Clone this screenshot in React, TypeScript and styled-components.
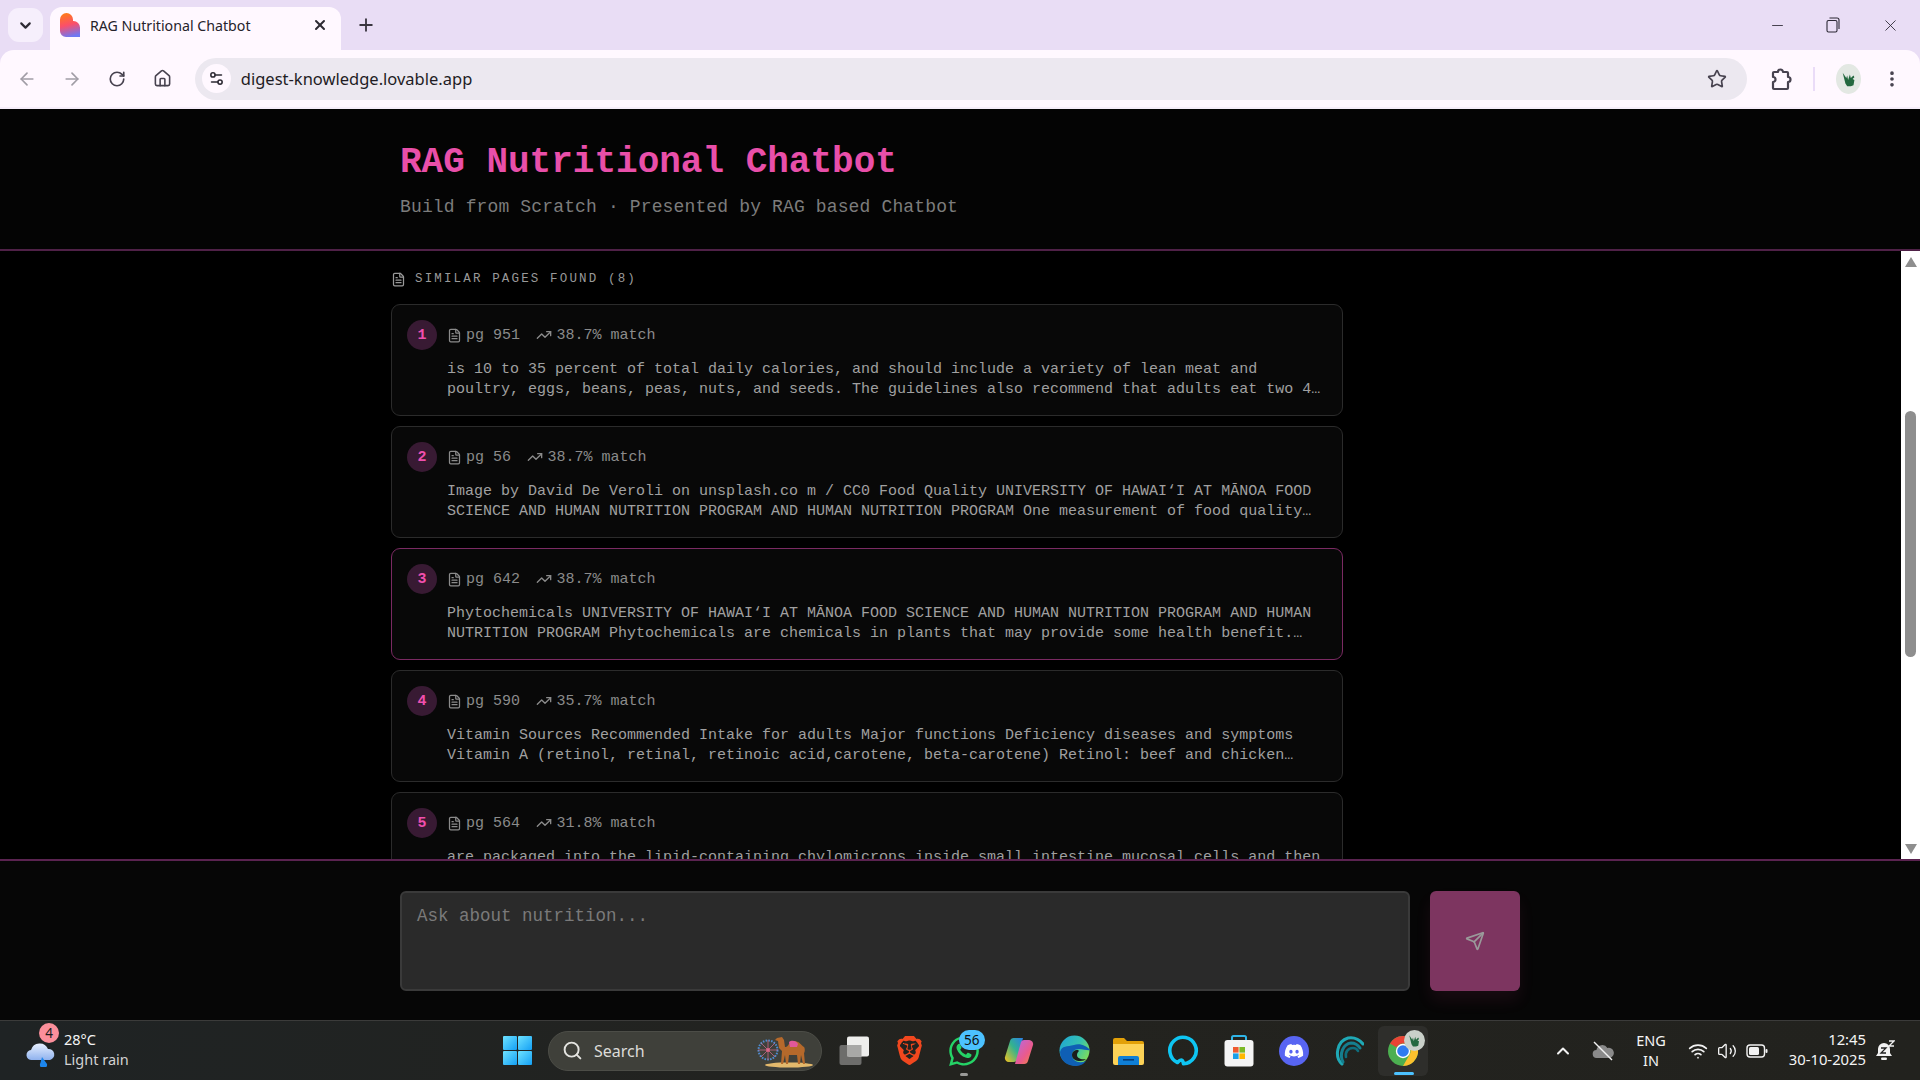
import React from "react";
import styled, { createGlobalStyle } from "styled-components";
import {
  ArrowLeft,
  ArrowRight,
  ChevronDown,
  ChevronUp,
  EllipsisVertical,
  FileText,
  Home,
  Minus,
  Plus,
  RotateCw,
  Search,
  Send,
  Settings2,
  Star,
  TrendingUp,
  Volume2,
  Wifi,
  X,
} from "lucide-react";
import { FaDiscord, FaWhatsapp } from "react-icons/fa";
import { SiBrave } from "react-icons/si";

const GlobalStyle = createGlobalStyle`
  html, body { margin: 0; padding: 0; background: #000; overflow: hidden; }
  * { box-sizing: border-box; }
`;

const sources = [
  {
    page: 951,
    score: "38.7",
    lines: [
      "is 10 to 35 percent of total daily calories, and should include a variety of lean meat and",
      "poultry, eggs, beans, peas, nuts, and seeds. The guidelines also recommend that adults eat two 4…",
    ],
  },
  {
    page: 56,
    score: "38.7",
    lines: [
      "Image by David De Veroli on unsplash.co m / CC0 Food Quality UNIVERSITY OF HAWAI‘I AT MĀNOA FOOD",
      "SCIENCE AND HUMAN NUTRITION PROGRAM AND HUMAN NUTRITION PROGRAM One measurement of food quality…",
    ],
  },
  {
    page: 642,
    score: "38.7",
    lines: [
      "Phytochemicals UNIVERSITY OF HAWAI‘I AT MĀNOA FOOD SCIENCE AND HUMAN NUTRITION PROGRAM AND HUMAN",
      "NUTRITION PROGRAM Phytochemicals are chemicals in plants that may provide some health benefit.…",
    ],
    hovered: true,
  },
  {
    page: 590,
    score: "35.7",
    lines: [
      "Vitamin Sources Recommended Intake for adults Major functions Deficiency diseases and symptoms",
      "Vitamin A (retinol, retinal, retinoic acid,carotene, beta-carotene) Retinol: beef and chicken…",
    ],
  },
  {
    page: 564,
    score: "31.8",
    lines: [
      "are packaged into the lipid-containing chylomicrons inside small intestine mucosal cells and then",
    ],
  },
];

const App: React.FC = () => {
  return (
    <Screen>
      <GlobalStyle />
      <TabStrip>
        <TabMenu>
          <ChevronDown size={17} strokeWidth={3} />
        </TabMenu>
        <Tab>
          <LovableIcon />
          <TabTitle>RAG Nutritional Chatbot</TabTitle>
          <X size={16} strokeWidth={3} color="#2d2a33" />
        </Tab>
        <NewTab>
          <Plus size={20} strokeWidth={2.2} />
        </NewTab>
        <WindowControls>
          <Minus size={17} strokeWidth={1.2} />
          <RestoreIcon />
          <X size={19} strokeWidth={1.1} />
        </WindowControls>
      </TabStrip>

      <Toolbar>
        <NavButton $dim>
          <ArrowLeft size={20} />
        </NavButton>
        <NavButton $dim>
          <ArrowRight size={20} />
        </NavButton>
        <NavButton>
          <RotateCw size={18} strokeWidth={2.2} />
        </NavButton>
        <NavButton>
          <Home size={19} strokeWidth={2} />
        </NavButton>
        <AddressBar>
          <SiteInfo>
            <Settings2 size={17} strokeWidth={2.2} />
          </SiteInfo>
          <Url>digest-knowledge.lovable.app</Url>
          <Star size={20} strokeWidth={2} color="#47424f" />
        </AddressBar>
        <ToolbarEnd>
          <ExtensionIcon />
          <ToolbarDivider />
          <Avatar>
            <GrassIcon size={18} />
          </Avatar>
          <EllipsisVertical size={20} strokeWidth={2.4} color="#47424f" />
        </ToolbarEnd>
      </Toolbar>

      <PageHeader>
        <Title>RAG Nutritional Chatbot</Title>
        <Subtitle>Build from Scratch · Presented by RAG based Chatbot</Subtitle>
      </PageHeader>

      <Main>
        <Results>
          <SectionLabel>
            <FileText size={15} />
            SIMILAR PAGES FOUND (8)
          </SectionLabel>
          <CardList>
            {sources.map((s, i) => (
              <Card key={s.page} $hovered={s.hovered}>
                <CardHead>
                  <Rank>{i + 1}</Rank>
                  <Meta>
                    <MetaIcon $gap={4}>
                      <FileText size={15} />
                    </MetaIcon>
                    pg {s.page}
                  </Meta>
                  <Meta>
                    <MetaIcon $gap={5}>
                      <TrendingUp size={16} />
                    </MetaIcon>
                    {s.score}% match
                  </Meta>
                </CardHead>
                <CardBody>
                  {s.lines.map((line) => (
                    <div key={line}>{line}</div>
                  ))}
                </CardBody>
              </Card>
            ))}
          </CardList>
        </Results>
        <ScrollTrack>
          <ScrollArrow $up />
          <ScrollThumb />
          <ScrollArrow />
        </ScrollTrack>
      </Main>

      <Composer>
        <Question placeholder="Ask about nutrition..." readOnly />
        <SendButton>
          <Send size={20} color="#9a9a9a" />
        </SendButton>
      </Composer>

      <Taskbar>
        <Weather>
          <WeatherIcon>
            <CloudRainIcon />
            <WeatherBadge>4</WeatherBadge>
          </WeatherIcon>
          <WeatherText>
            <strong>28°C</strong>
            <span>Light rain</span>
          </WeatherText>
        </Weather>

        <TaskCenter>
          <StartIcon />
          <SearchPill>
            <Search size={21} strokeWidth={2.2} color="#e4e4e0" />
            <SearchText>Search</SearchText>
            <CamelArt />
          </SearchPill>
          <TaskSlot>
            <TaskViewIcon />
          </TaskSlot>
          <TaskSlot>
            <SiBrave size={29} color="#f1471e" />
          </TaskSlot>
          <TaskSlot>
            <FaWhatsapp size={34} color="#25d366" />
            <TaskCount>56</TaskCount>
            <RunningDot />
          </TaskSlot>
          <TaskSlot>
            <CopilotIcon />
          </TaskSlot>
          <TaskSlot>
            <EdgeIcon />
          </TaskSlot>
          <TaskSlot>
            <FolderIcon />
          </TaskSlot>
          <TaskSlot>
            <AlexaIcon />
          </TaskSlot>
          <TaskSlot>
            <StoreIcon />
          </TaskSlot>
          <TaskSlot>
            <DiscordDisc>
              <FaDiscord size={20} color="#fff" />
            </DiscordDisc>
          </TaskSlot>
          <TaskSlot>
            <SwirlIcon />
          </TaskSlot>
          <TaskSlot $active>
            <ChromeIcon />
            <ChromeAvatar>
              <GrassIcon size={15} />
            </ChromeAvatar>
            <ActiveBar />
          </TaskSlot>
        </TaskCenter>

        <Tray>
          <ChevronUp size={20} strokeWidth={2.4} color="#f2f2f2" />
          <OneDriveOff />
          <TrayLang>
            <span>ENG</span>
            <span>IN</span>
          </TrayLang>
          <TrayIcons>
            <Wifi size={20} color="#f2f2f2" />
            <Volume2 size={20} strokeWidth={1.6} color="#f2f2f2" />
            <BatteryIcon />
          </TrayIcons>
          <Clock>
            <span>12:45</span>
            <span>30-10-2025</span>
          </Clock>
          <BellIcon />
        </Tray>
      </Taskbar>
    </Screen>
  );
};

export default App;

/* drawings */

const LovableIcon = () => (
  <svg width="20" height="24" viewBox="0 0 20 24">
    <defs>
      <linearGradient id="lov" x1="0.3" y1="0" x2="0.5" y2="1">
        <stop offset="0" stopColor="#ff7a1a" />
        <stop offset="0.5" stopColor="#fb4f6a" />
        <stop offset="1" stopColor="#6d78f5" />
      </linearGradient>
    </defs>
    <path
      d="M0 6.500a6.500 6.500 0 0 1 13 0V8h.5a6.500 6.500 0 0 1 6.500 6.500V24H6a6 6 0 0 1-6-6z"
      fill="url(#lov)"
    />
  </svg>
);

const RestoreIcon = () => (
  <svg width="14" height="16" viewBox="0 0 14 16" fill="none" stroke="#2b2733" strokeWidth="1.1">
    <rect x="1" y="3.500" width="10" height="11.500" rx="1.500" />
    <path d="M3.500 1h7.500a2 2 0 0 1 2 2v9" />
  </svg>
);

const ExtensionIcon = () => (
  <svg width="22" height="24" viewBox="0 0 22 24" fill="none" stroke="#47424f" strokeWidth="2.200" strokeLinejoin="round">
    <path d="M4 5h4a2.500 2.500 0 0 1 5 0h4a1 1 0 0 1 1 1v4a2.500 2.500 0 0 1 0 5v6a1 1 0 0 1-1 1H4a1 1 0 0 1-1-1v-6a2.500 2.500 0 0 0 0-5V6a1 1 0 0 1 1-1z" />
  </svg>
);

const GrassIcon = ({ size }: { size: number }) => (
  <svg width={size} height={size} viewBox="0 0 20 20" fill="#23683f">
    <path d="M3 3l4 6 1-3 1 5 2-6 1 4 3-3 1 2-2 2 2 1-1 6-3 1H8l-2-3z" />
  </svg>
);

const CloudRainIcon = () => (
  <svg width="32" height="28" viewBox="0 0 32 28">
    <defs>
      <linearGradient id="cloud" x1="0" y1="0" x2="0" y2="1">
        <stop offset="0" stopColor="#e8f0ff" />
        <stop offset="1" stopColor="#8fb2ee" />
      </linearGradient>
    </defs>
    <path
      d="M7 21a5 5 0 0 1-1-10 9 9 0 0 1 17-1 5.600 5.600 0 0 1 2 11z"
      fill="url(#cloud)"
    />
    <path d="M17 18l5 7a3.600 3.600 0 1 1-6.600-1z" fill="#1d86ec" />
  </svg>
);

const StartIcon = () => (
  <StartGrid>
    <StartPane />
    <StartPane />
    <StartPane />
    <StartPane />
  </StartGrid>
);

const CamelArt = () => (
  <svg width="56" height="34" viewBox="0 0 56 34">
    <ellipse cx="32" cy="31" rx="24" ry="2.600" fill="#e3b96c" />
    <circle cx="11" cy="16" r="9.500" fill="none" stroke="#4f8ccf" strokeWidth="2" strokeDasharray="1.600 1.200" />
    <circle cx="11" cy="16" r="2" fill="#e2536f" />
    <path d="M11 6v20M1 16h20M4 9l14 14M18 9L4 23" stroke="#d36f94" strokeWidth="0.700" />
    <path
      d="M20 4l5-1 2 3 1 7c3 1 4-6 9-6s7 4 10 6c1 1 1 5 0 6l1 11h-2l-2-9-1 9h-2l-1-9h-8l-1 9h-2l-1-9-2 9h-2l1-13-3-3-1-7-3-1z"
      fill="#b5692b"
    />
    <path d="M32 8c2-2 7-2 9 2l-1 3h-7z" fill="#e2589a" />
  </svg>
);

const TaskViewIcon = () => (
  <svg width="31" height="30" viewBox="0 0 31 30">
    <rect x="0.500" y="9" width="22" height="20" rx="2" fill="#6d6d6b" />
    <rect x="8" y="0.500" width="22" height="20" rx="2" fill="#eeeeec" />
    <rect x="8" y="9" width="14.500" height="11.500" fill="#a8a8a6" />
  </svg>
);

const CopilotIcon = () => (
  <svg width="30" height="30" viewBox="0 0 30 30">
    <defs>
      <linearGradient id="copA" x1="0" y1="1" x2="1" y2="0">
        <stop offset="0" stopColor="#f5c21b" />
        <stop offset="0.550" stopColor="#33b28f" />
        <stop offset="1" stopColor="#2b7fe8" />
      </linearGradient>
      <linearGradient id="copB" x1="0" y1="0" x2="1" y2="1">
        <stop offset="0" stopColor="#b46ae6" />
        <stop offset="0.600" stopColor="#ea5a8c" />
        <stop offset="1" stopColor="#f08a3c" />
      </linearGradient>
    </defs>
    <path d="M10 2h9l-6 22a4 4 0 0 1-3 2H5a4 4 0 0 1-4-5l5-16a4 4 0 0 1 4-3z" fill="url(#copA)" />
    <path d="M20 28h-9l6-22a4 4 0 0 1 3-2h5a4 4 0 0 1 4 5l-5 16a4 4 0 0 1-4 3z" fill="url(#copB)" />
  </svg>
);

const EdgeIcon = () => (
  <svg width="31" height="31" viewBox="0 0 31 31">
    <defs>
      <linearGradient id="edgeA" x1="0" y1="0" x2="1" y2="0.600">
        <stop offset="0" stopColor="#1da4d8" />
        <stop offset="0.600" stopColor="#35c1b0" />
        <stop offset="1" stopColor="#7bdc5f" />
      </linearGradient>
    </defs>
    <circle cx="15.500" cy="15.500" r="15" fill="url(#edgeA)" />
    <path d="M1 17c0 9 8 14 15 14 5 0 9-2 11-5-7 3-14 0-14-6 0-3 2-6 7-6 4 0 10 2 11 1-3-4-10-7-16-5C8 12 3 10 1 17z" fill="#0f5fb4" />
    <path d="M19 15c-4 0-6 2-6 5 0 4 4 6 8 6 3 0 5-1 6-2-5 1-9-1-9-4 0-2 1-3 2-4z" fill="#1b1d1c" />
  </svg>
);

const FolderIcon = () => (
  <svg width="31" height="28" viewBox="0 0 31 28">
    <path d="M0 3a2 2 0 0 1 2-2h9l3 3h15a2 2 0 0 1 2 2v5H0z" fill="#e2a008" />
    <path d="M0 7h31v19a2 2 0 0 1-2 2H2a2 2 0 0 1-2-2z" fill="#fcd257" />
    <path d="M5 28v-7a2 2 0 0 1 2-2h17a2 2 0 0 1 2 2v7z" fill="#0f7fd6" />
    <rect x="10" y="22" width="11" height="1.600" fill="#063c78" />
  </svg>
);

const AlexaIcon = () => (
  <svg width="31" height="31" viewBox="0 0 31 31" fill="none">
    <path
      d="M9.500 27.500A13.200 13.200 0 1 1 15.500 28.700c-.6-3.800-2.200-5.200-6-1.200z"
      stroke="#0ec5f2"
      strokeWidth="3.600"
      strokeLinejoin="round"
    />
  </svg>
);

const StoreIcon = () => (
  <svg width="30" height="32" viewBox="0 0 30 32">
    <path d="M8 6V2.500A1.500 1.500 0 0 1 9.500 1h11A1.500 1.500 0 0 1 22 2.500V6" fill="none" stroke="#2fb5e8" strokeWidth="2" />
    <rect x="0.500" y="5" width="29" height="26.500" rx="3" fill="#f4f4f4" />
    <rect x="9" y="12" width="5.600" height="5.600" fill="#ee5a2f" />
    <rect x="15.400" y="12" width="5.600" height="5.600" fill="#7cb927" />
    <rect x="9" y="18.400" width="5.600" height="5.600" fill="#1a9fe8" />
    <rect x="15.400" y="18.400" width="5.600" height="5.600" fill="#ffb800" />
  </svg>
);

const SwirlIcon = () => (
  <svg width="31" height="31" viewBox="0 0 31 31" fill="none" stroke="#1fa9b6" strokeLinecap="round">
    <path d="M9 29C1 22 4 6 15 3c6-1 11 1 15 6" strokeWidth="3" />
    <path d="M10 27C6 19 10 9 18 8c4 0 7 2 9 5" strokeWidth="3" stroke="#157f8f" />
    <path d="M13 22c-1-5 2-9 7-9 2 0 4 1 5 3" strokeWidth="2.600" stroke="#0f6e7d" />
  </svg>
);

const ChromeIcon = () => (
  <svg width="30" height="30" viewBox="0 0 30 30">
    <circle cx="15" cy="15" r="15" fill="#4caf50" />
    <path d="M15 0a15 15 0 0 1 13 7.500H15a7.500 7.500 0 0 0-6.500 3.800L2 7.500A15 15 0 0 1 15 0z" fill="#ea4335" />
    <path d="M28 7.500A15 15 0 0 1 15 30l6.500-11.200A7.500 7.500 0 0 0 15 7.500z" fill="#fbc02d" />
    <circle cx="15" cy="15" r="7.200" fill="#fff" />
    <circle cx="15" cy="15" r="5.800" fill="#2f7bf0" />
  </svg>
);

const OneDriveOff = () => (
  <OneDriveBox>
    <svg width="22" height="20" viewBox="0 0 22 20">
      <path d="M5 17a4 4 0 0 1-.6-8 6 6 0 0 1 11-2 5 5 0 0 1 2.600 10z" fill="#8a8a8a" />
      <path d="M2 1l18 18" stroke="#f2f2f2" strokeWidth="1.400" />
    </svg>
  </OneDriveBox>
);

const BatteryIcon = () => (
  <svg width="22" height="16" viewBox="0 0 22 16">
    <rect x="1" y="2" width="17.500" height="12" rx="3" fill="none" stroke="#f2f2f2" strokeWidth="1.400" />
    <rect x="3" y="4" width="10" height="8" rx="1.500" fill="#f2f2f2" />
    <rect x="19.500" y="6" width="2" height="4" rx="1" fill="#f2f2f2" />
  </svg>
);

const BellIcon = () => (
  <svg width="20" height="22" viewBox="0 0 20 22">
    <path d="M9 3a6 6 0 0 1 6 6v4l2 3H1l2-3V9a6 6 0 0 1 6-6z" fill="#f2f2f2" />
    <rect x="6" y="17.500" width="6" height="2.500" rx="1.200" fill="#f2f2f2" />
    <path d="M6 8h5l-5 5h5" fill="none" stroke="#222" strokeWidth="1.300" />
    <path d="M14 1h5l-5 5h5" fill="none" stroke="#f2f2f2" strokeWidth="1.300" />
  </svg>
);

/* browser chrome */

const uiFont = `"Noto Sans", "Open Sans", "Liberation Sans", sans-serif`;
const monoFont = `"Liberation Mono", "Courier New", monospace`;

const Screen = styled.div`
  width: 1920px;
  height: 1080px;
  display: flex;
  flex-direction: column;
  overflow: hidden;
  background: #e9ddf5;
  font-family: ${monoFont};
`;

const TabStrip = styled.div`
  height: 50px;
  flex: none;
  display: flex;
  align-items: flex-end;
  padding-left: 8px;
`;

const TabMenu = styled.div`
  width: 35px;
  height: 34px;
  margin-bottom: 8px;
  border-radius: 11px;
  background: #f6effc;
  color: #2d2a33;
  display: flex;
  align-items: center;
  justify-content: center;
`;

const Tab = styled.div`
  width: 291px;
  height: 43px;
  margin-left: 7px;
  padding: 0 13px 7px 10px;
  border-radius: 12px 12px 0 0;
  background: #fff8ff;
  display: flex;
  align-items: center;
  gap: 10px;
`;

const TabTitle = styled.span`
  flex: 1;
  font: 14.200px ${uiFont};
  color: #26232b;
`;

const NewTab = styled.div`
  width: 20px;
  height: 20px;
  margin: 0 0 15px 15px;
  color: #3a3640;
`;

const WindowControls = styled.div`
  margin-left: auto;
  width: 151.500px;
  height: 50px;
  padding: 0 20px 0 0;
  display: flex;
  align-items: center;
  justify-content: space-between;
  color: #2b2733;
`;

const Toolbar = styled.div`
  height: 59px;
  flex: none;
  padding: 0 18px 0 5px;
  display: flex;
  align-items: center;
  background: #fff8ff;
  border-radius: 14px 14px 0 0;
  border-bottom: 2px solid #f6eefa;
`;

const NavButton = styled.div<{ $dim?: boolean }>`
  width: 45px;
  display: flex;
  justify-content: center;
  color: ${(p) => (p.$dim ? "#a19da6" : "#47424f")};
`;

const AddressBar = styled.div`
  width: 1554px;
  height: 42px;
  margin-left: 10px;
  padding: 0 20px 0 7px;
  border-radius: 21px;
  background: #ece8f0;
  display: flex;
  align-items: center;
`;

const SiteInfo = styled.div`
  width: 29px;
  height: 29px;
  border-radius: 50%;
  background: #fff8ff;
  color: #2d2a33;
  display: flex;
  align-items: center;
  justify-content: center;
`;

const Url = styled.span`
  flex: 1;
  margin-left: 10px;
  font: 16.500px ${uiFont};
  color: #1f1c24;
`;

const ToolbarEnd = styled.div`
  flex: 1;
  padding-left: 23px;
  display: flex;
  align-items: center;
`;

const ToolbarDivider = styled.div`
  width: 2px;
  height: 24px;
  margin: 0 21px;
  background: #eadcf8;
`;

const Avatar = styled.div`
  width: 25px;
  height: 30px;
  margin-right: 21px;
  border-radius: 50%;
  background: #e3e8e3;
  display: flex;
  align-items: center;
  justify-content: center;
`;

/* page */

const PageHeader = styled.header`
  height: 142px;
  flex: none;
  padding: 34px 0 0 400px;
  background: #040404;
  border-bottom: 2px solid #4f2147;
`;

const Title = styled.h1`
  margin: 0;
  font: 700 36px/40px ${monoFont};
  color: #e94fa9;
`;

const Subtitle = styled.p`
  margin: 10px 0 0;
  font: 18px/28px ${monoFont};
  letter-spacing: 0.14px;
  color: #7c7c7c;
`;

const Main = styled.main`
  height: 608px;
  flex: none;
  display: flex;
  background: #000;
`;

const Results = styled.section`
  flex: 1;
  overflow: hidden;
  padding: 19px 0 0 391px;
`;

const SectionLabel = styled.div`
  height: 18px;
  display: flex;
  align-items: center;
  gap: 9px;
  font-size: 12.500px;
  letter-spacing: 2.150px;
  color: #999;
`;

const CardList = styled.div`
  width: 952px;
  margin-top: 16px;
  display: flex;
  flex-direction: column;
  gap: 10px;
`;

const Card = styled.article<{ $hovered?: boolean }>`
  height: 112px;
  flex: none;
  padding: 15px;
  border: 1px solid ${(p) => (p.$hovered ? "#7a2a62" : "#2b2b2b")};
  border-radius: 9px;
  background: #080808;
`;

const CardHead = styled.div`
  display: flex;
  align-items: center;
  height: 30px;
`;

const Rank = styled.div`
  width: 30px;
  height: 30px;
  margin-right: 10px;
  border-radius: 50%;
  background: #381a33;
  color: #f04fae;
  font-size: 15px;
  font-weight: 700;
  display: flex;
  align-items: center;
  justify-content: center;
`;

const Meta = styled.div`
  display: flex;
  align-items: center;
  margin-right: 15.500px;
  font-size: 15px;
  color: #8b8b8b;
`;

const MetaIcon = styled.span<{ $gap: number }>`
  display: flex;
  margin-right: ${(p) => p.$gap}px;
`;

const CardBody = styled.div`
  margin: 10px 0 0 40px;
  font-size: 15px;
  line-height: 20px;
  color: #a0a0a0;
  white-space: nowrap;
`;

const ScrollTrack = styled.div`
  width: 19px;
  flex: none;
  display: flex;
  flex-direction: column;
  align-items: center;
  background: #fff;
`;

const ScrollArrow = styled.div<{ $up?: boolean }>`
  width: 0;
  height: 0;
  margin: ${(p) => (p.$up ? "6px 0 0" : "auto 0 5px")};
  border-left: 6px solid transparent;
  border-right: 6px solid transparent;
  border-${(p) => (p.$up ? "bottom" : "top")}: 10px solid #8e8e8e;
`;

const ScrollThumb = styled.div`
  width: 11px;
  height: 246px;
  margin-top: 144px;
  border-radius: 6px;
  background: #8e8e8e;
`;

const Composer = styled.footer`
  height: 161px;
  flex: none;
  padding: 30px 0 0 400px;
  display: flex;
  gap: 20px;
  align-items: flex-start;
  background: #060606;
  border-top: 2px solid #5a2350;
`;

const Question = styled.textarea`
  width: 1010px;
  height: 100px;
  padding: 11px 15px;
  resize: none;
  outline: none;
  border: 2px solid #3a3a3a;
  border-radius: 6px;
  background: #2a2a2a;
  font: 17.500px/24px ${monoFont};
  &::placeholder {
    color: #7a7a7a;
    opacity: 1;
  }
`;

const SendButton = styled.button`
  width: 90px;
  height: 100px;
  padding: 0;
  border: none;
  border-radius: 6px;
  background: #7d3560;
  box-shadow: 0 10px 16px rgba(236, 72, 153, 0.08);
  display: flex;
  align-items: center;
  justify-content: center;
`;

/* taskbar */

const Taskbar = styled.div`
  height: 60px;
  flex: none;
  display: flex;
  align-items: center;
  border-top: 1px solid #3b3b3a;
  background: linear-gradient(90deg, #1f2324 0%, #23231f 50%, #22221e 100%);
  font-family: ${uiFont};
  color: #f4f4f4;
`;

const Weather = styled.div`
  width: 503px;
  flex: none;
  padding-left: 25px;
  display: flex;
  align-items: center;
  gap: 7px;
`;

const WeatherIcon = styled.div`
  position: relative;
  width: 32px;
  height: 28px;
  margin-top: 4px;
`;

const WeatherBadge = styled.span`
  position: absolute;
  left: 14px;
  top: -16px;
  width: 20px;
  height: 20px;
  border-radius: 50%;
  background: #fb8f9b;
  color: #1c1c1c;
  font-size: 13.500px;
  line-height: 20px;
  text-align: center;
`;

const WeatherText = styled.div`
  display: flex;
  flex-direction: column;
  margin-top: -4px;
  font-size: 14.500px;
  line-height: 20px;
  strong {
    font-weight: 400;
  }
  span {
    color: #d2d2d2;
  }
`;

const TaskCenter = styled.div`
  display: flex;
  align-items: center;
`;

const StartGrid = styled.div`
  width: 29px;
  height: 29px;
  display: grid;
  grid-template-columns: 1fr 1fr;
  gap: 1.500px;
`;

const StartPane = styled.div`
  border-radius: 1px;
  background: linear-gradient(135deg, #6ee2ff, #14a0f5);
`;

const SearchPill = styled.div`
  width: 274px;
  height: 40px;
  margin: 0 5px 0 16px;
  padding: 0 8px 0 13px;
  border-radius: 20px;
  border: 1px solid #4c4d47;
  background: #3f403a;
  display: flex;
  align-items: center;
`;

const SearchText = styled.span`
  flex: 1;
  margin-left: 11px;
  font-size: 16px;
  color: #dcdcd8;
`;

const TaskSlot = styled.div<{ $active?: boolean }>`
  position: relative;
  width: 54.900px;
  height: 50px;
  display: flex;
  align-items: center;
  justify-content: center;
  &::before {
    content: "";
    position: absolute;
    inset: 0 2.500px;
    border-radius: 6px;
    background: ${(p) => (p.$active ? "#2e2e2b" : "transparent")};
  }
  > * {
    position: relative;
  }
`;

const TaskCount = styled.span`
  && {
    position: absolute;
  }
  left: 22px;
  top: 4px;
  width: 26px;
  height: 20px;
  border-radius: 10px;
  background: #4cc2ff;
  color: #111;
  font-size: 13.500px;
  line-height: 20px;
  text-align: center;
`;

const RunningDot = styled.span`
  && {
    position: absolute;
  }
  left: 23px;
  bottom: 0;
  width: 8px;
  height: 3px;
  border-radius: 2px;
  background: #9a9a98;
`;

const DiscordDisc = styled.div`
  width: 30px;
  height: 30px;
  border-radius: 50%;
  background: #5865f2;
  display: flex;
  align-items: center;
  justify-content: center;
`;

const ChromeAvatar = styled.div`
  && {
    position: absolute;
  }
  left: 28px;
  top: 4px;
  width: 21px;
  height: 21px;
  border-radius: 50%;
  background: #c9d0c9;
  display: flex;
  align-items: center;
  justify-content: center;
`;

const ActiveBar = styled.span`
  && {
    position: absolute;
  }
  left: 18px;
  bottom: 1px;
  width: 20px;
  height: 3px;
  border-radius: 2px;
  background: #4cc2ff;
`;

const Tray = styled.div`
  margin-left: auto;
  padding-right: 25px;
  display: flex;
  align-items: center;
`;

const OneDriveBox = styled.div`
  display: flex;
  margin-left: 19px;
`;

const TrayLang = styled.div`
  width: 30px;
  margin: -2px 22px 0;
  display: flex;
  flex-direction: column;
  align-items: center;
  font-size: 14.500px;
  line-height: 20px;
`;

const TrayIcons = styled.div`
  display: flex;
  align-items: center;
  gap: 9px;
`;

const Clock = styled.div`
  width: 90px;
  margin: -4px 9px 0 8px;
  display: flex;
  flex-direction: column;
  align-items: flex-end;
  font-size: 14.800px;
  line-height: 20px;
  white-space: nowrap;
`;
